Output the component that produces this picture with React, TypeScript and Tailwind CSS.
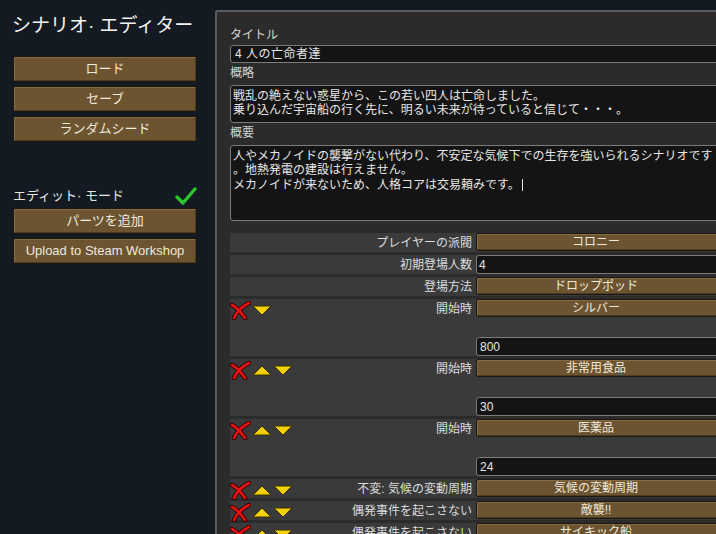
import React from "react";

const FONT = { fontFamily: '"Liberation Sans", "Noto Sans CJK JP", sans-serif' };

const Btn = ({ children, className = "" }: any) => (
  <div
    className={
      "flex items-center justify-center rounded-[2px] border border-[#1c170f] bg-[#6d5431] text-[#efe9dc] shadow-[inset_1px_1px_0_#856a43,inset_-1px_-1px_0_#4e3c22] " +
      className
    }
  >
    {children}
  </div>
);

const Field = ({ children, className = "" }: any) => (
  <div className={"rounded-[3px] border border-[#7b7b7b] bg-[#141414] text-[#e6e6e6] " + className}>{children}</div>
);

const RedX = () => (
  <svg width="21" height="20" viewBox="0 0 21 20">
    <path d="M2 5 C6 7 11 12 15 18" stroke="#300" strokeWidth="4.5" fill="none" strokeLinecap="round" />
    <path d="M19 3 C13 6 7 11 4 18" stroke="#300" strokeWidth="4.5" fill="none" strokeLinecap="round" />
    <path d="M2 5 C6 7 11 12 15 18" stroke="#e01414" strokeWidth="2.6" fill="none" strokeLinecap="round" />
    <path d="M19 3 C13 6 7 11 4 18" stroke="#e01414" strokeWidth="2.6" fill="none" strokeLinecap="round" />
  </svg>
);

const Tri = ({ up }: { up?: boolean }) => (
  <svg width="20" height="11" viewBox="0 0 20 11">
    <polygon
      points={up ? "10,1 19,10 1,10" : "1,1 19,1 10,10"}
      fill="#f2d10a"
      stroke="#3a3000"
      strokeWidth="1"
      strokeLinejoin="round"
    />
  </svg>
);

type Row = {
  label: string;
  value: string;
  kind: "btn" | "input";
  icons?: "down" | "both";
  sub?: string;
};

const rows: Row[] = [
  { label: "プレイヤーの派閥", value: "コロニー", kind: "btn" },
  { label: "初期登場人数", value: "4", kind: "input" },
  { label: "登場方法", value: "ドロップポッド", kind: "btn" },
  { label: "開始時", value: "シルバー", kind: "btn", icons: "down", sub: "800" },
  { label: "開始時", value: "非常用食品", kind: "btn", icons: "both", sub: "30" },
  { label: "開始時", value: "医薬品", kind: "btn", icons: "both", sub: "24" },
  { label: "不変: 気候の変動周期", value: "気候の変動周期", kind: "btn", icons: "both" },
  { label: "偶発事件を起こさない", value: "敵襲!!", kind: "btn", icons: "both" },
  { label: "偶発事件を起こさない", value: "サイキック船", kind: "btn", icons: "both" },
];

function PartRow({ r }: { r: Row }) {
  return (
    <div className={"flex bg-[#3a3a3b] " + (r.sub ? "h-[57px]" : "h-[19px]")}>
      <div className="flex w-[246px] shrink-0 items-start">
        {r.icons && (
          <div className="flex items-center gap-[1px] pt-[1px]">
            <RedX />
            {r.icons === "both" && <Tri up />}
            <Tri />
          </div>
        )}
        <div className="flex h-[19px] flex-1 items-center justify-end pr-[4px] text-[12px] text-[#dcdcdc]">{r.label}</div>
      </div>
      {/* 値の列は画面の右端の外まで続く */}
      <div className="flex flex-1 flex-col justify-between">
        {r.kind === "btn" ? (
          <Btn className="h-[18px] pr-[10px] text-[12px]">{r.value}</Btn>
        ) : (
          <Field className="flex h-[19px] items-center px-[2px] text-[12px]">{r.value}</Field>
        )}
        {r.sub && <Field className="flex h-[19px] items-center px-[3px] text-[12px]">{r.sub}</Field>}
      </div>
    </div>
  );
}

export default function App() {
  return (
    <div className="flex h-[534px] w-[716px] overflow-hidden bg-[#141a21]" style={FONT}>
      {/* 左側メニュー */}
      <div className="w-[215px] shrink-0 pl-[13px] pr-[18px] pt-[12px]">
        <div className="-ml-[1px] h-[28px] whitespace-nowrap text-[19px] leading-[28px] text-[#f2f2f2]">シナリオ· エディター</div>
        <div className="mt-[16px] flex flex-col gap-[4px]">
          <Btn className="h-[26px] text-[13px]">ロード</Btn>
          <Btn className="h-[26px] text-[13px]">セーブ</Btn>
          <Btn className="h-[26px] text-[13px]">ランダムシード</Btn>
        </div>
        <div className="mt-[44px] flex h-[20px] items-center justify-between">
          <span className="text-[13px] text-[#e6e6e6]">エディット· モード</span>
          <svg width="22" height="20" viewBox="0 0 22 20">
            <path d="M2 11 L8 17 L20 3" stroke="#2fc42f" strokeWidth="3.4" fill="none" strokeLinecap="round" strokeLinejoin="round" />
          </svg>
        </div>
        <div className="mt-[2px] flex flex-col gap-[4px]">
          <Btn className="h-[26px] text-[13px]">パーツを追加</Btn>
          <Btn className="h-[26px] text-[13px]">Upload to Steam Workshop</Btn>
        </div>
      </div>

      {/* 右側パネル */}
      <div className="mt-[10px] min-w-0 flex-1 overflow-hidden rounded-tl-[3px] border-l-2 border-t-2 border-[#5b5b5b] bg-[#2b2b2b] pl-[13px] pt-[14px]">
        <div className="-mr-[10px]">
          <div className="h-[18px] text-[12px] leading-[18px] text-[#d6d6d6]">タイトル</div>
          <Field className="mt-[1px] flex h-[18px] items-center px-[4px] text-[12px] tracking-[0.5px]">4 人の亡命者達</Field>
          <div className="h-[20px] text-[12px] leading-[20px] text-[#d6d6d6]">概略</div>
          <Field className="mt-[2px] h-[38px] whitespace-pre px-[2px] py-[3px] text-[12px] leading-[14px]">
            {"戦乱の絶えない惑星から、この若い四人は亡命しました。\n乗り込んだ宇宙船の行く先に、明るい未来が待っていると信じて・・・。"}
          </Field>
          <div className="h-[20px] text-[12px] leading-[20px] text-[#d6d6d6]">概要</div>
          <Field className="mt-[2px] h-[76px] whitespace-pre px-[2px] py-[3px] text-[12px] leading-[14px]">
            {"人やメカノイドの襲撃がない代わり、不安定な気候下での生存を強いられるシナリオです\n。地熱発電の建設は行えません。\nメカノイドが来ないため、人格コアは交易頼みです。"}
            <span className="ml-[2px] inline-block h-[12px] w-[1px] translate-y-[2px] bg-[#e6e6e6]" />
          </Field>
          <div className="mt-[12px] flex flex-col gap-[3px]">
            {rows.map((r, i) => (
              <PartRow key={i} r={r} />
            ))}
          </div>
        </div>
      </div>
    </div>
  );
}
